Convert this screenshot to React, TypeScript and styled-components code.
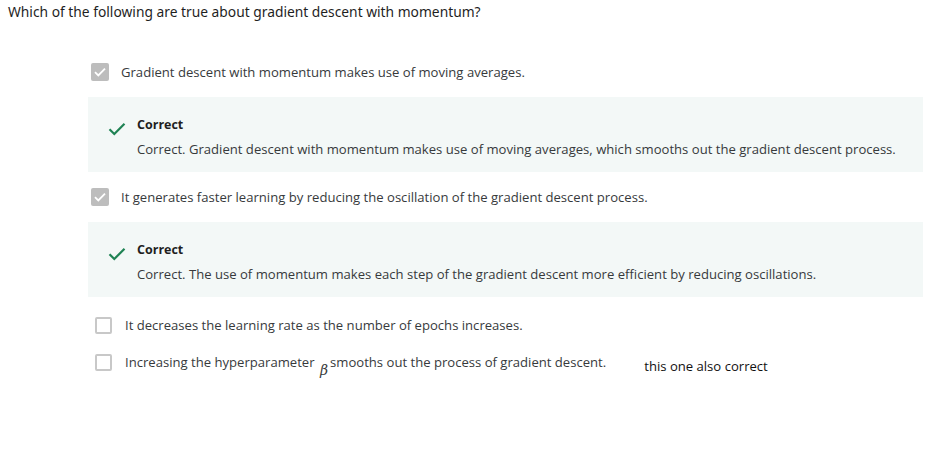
import styled, { createGlobalStyle } from 'styled-components'

const Global = createGlobalStyle`
body {
    margin: 0;
    background: #ffffff;
    font-family: 'Open Sans', 'Noto Sans', Arial, sans-serif;
}
`

interface Option {
    text: React.ReactNode
    checked: boolean
    feedback?: string
    note?: string
}

export default function App (): JSX.Element {
    const options: Option[] = [
        {
            text: 'Gradient descent with momentum makes use of moving averages.',
            checked: true,
            feedback: 'Correct. Gradient descent with momentum makes use of moving averages, which smooths out the gradient descent process.',
        },
        {
            text: 'It generates faster learning by reducing the oscillation of the gradient descent process.',
            checked: true,
            feedback: 'Correct. The use of momentum makes each step of the gradient descent more efficient by reducing oscillations.',
        },
        {
            text: 'It decreases the learning rate as the number of epochs increases.',
            checked: false,
        },
        {
            text: <>Increasing the hyperparameter <Beta>β</Beta>smooths out the process of gradient descent.</>,
            checked: false,
            note: 'this one also correct',
        },
    ]

    return <Page>
        <Global />
        <Question>Which of the following are true about gradient descent with momentum?</Question>
        <List>
            {options.map((option, index) => (
                <Item key={index}>
                    <Row checked={option.checked}>
                        <Box checked={option.checked}>
                            {option.checked && <svg width='12' height='10' viewBox='0 0 12 10'>
                                <path d='M1 5.2 L4.3 8.4 L11 1.6' fill='none' stroke='#ffffff' strokeWidth='1.8' />
                            </svg>}
                        </Box>
                        <Label>{option.text}</Label>
                        {option.note && <Note>{option.note}</Note>}
                    </Row>
                    {option.feedback && <Feedback>
                        <Tick>
                            <svg width='18' height='14' viewBox='0 0 18 14'>
                                <path d='M1.5 7.2 L6.3 12 L16.5 1.8' fill='none' stroke='#1f8354' strokeWidth='2.2' />
                            </svg>
                        </Tick>
                        <FeedbackBody>
                            <Verdict>Correct</Verdict>
                            <Explanation>{option.feedback}</Explanation>
                        </FeedbackBody>
                    </Feedback>}
                </Item>
            ))}
        </List>
    </Page>
}

const Page = styled.div`
padding: 3px 8px 0 8px;
`

const Question = styled.div`
font-family: 'Noto Sans', 'Open Sans', sans-serif;
font-size: 13.8px;
color: #1f1f1f;
line-height: 18px;
`

const List = styled.div`
display: flex;
flex-direction: column;
padding: 42px 0 0 80px;
width: 835px;
`

const Item = styled.div`
display: flex;
flex-direction: column;
`

const Row = styled.div<{ checked: boolean }>`
display: flex;
align-items: center;
height: 18px;
padding-left: ${p => p.checked ? '3px' : '7px'};
margin-top: ${p => p.checked ? '0' : '3px'};
margin-bottom: ${p => p.checked ? '16px' : '16px'};
`

const Box = styled.div<{ checked: boolean }>`
box-sizing: border-box;
width: ${p => p.checked ? '18px' : '17px'};
height: ${p => p.checked ? '18px' : '17px'};
border-radius: 2px;
display: flex;
align-items: center;
justify-content: center;
background: ${p => p.checked ? '#bdbdbd' : '#ffffff'};
border: ${p => p.checked ? 'none' : '2px solid #c8c8c8'};
margin-right: ${p => p.checked ? '12px' : '13px'};
flex-shrink: 0;
`

const Label = styled.span`
font-size: 13.1px;
color: #373a3c;
white-space: nowrap;
`

const Beta = styled.span`
font-family: 'DejaVu Serif', serif;
font-style: italic;
font-size: 14px;
position: relative;
top: 8px;
margin: 0 2px 0 2px;
`

const Note = styled.span`
font-family: 'Open Sans', sans-serif;
font-size: 13.1px;
color: #111111;
margin-left: 38px;
position: relative;
top: 4px;
`

const Feedback = styled.div`
display: flex;
align-items: flex-start;
background: #f3f8f7;
height: 75px;
box-sizing: border-box;
padding: 20px 0 0 20px;
margin-bottom: 16px;
`

const Tick = styled.div`
width: 18px;
height: 14px;
margin: 2px 11px 0 0;
`

const FeedbackBody = styled.div`
display: flex;
flex-direction: column;
gap: 7px;
`

const Verdict = styled.div`
font-size: 12.5px;
font-weight: 700;
color: #1f1f1f;
line-height: 16px;
`

const Explanation = styled.div`
font-size: 13.1px;
color: #373a3c;
line-height: 18px;
white-space: nowrap;
`
